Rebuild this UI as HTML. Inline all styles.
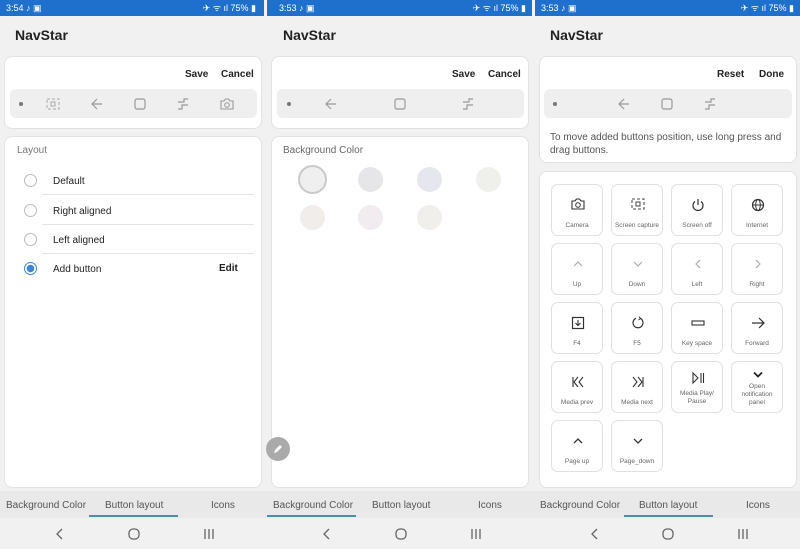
<!DOCTYPE html>
<html><head><meta charset="utf-8"><style>
*{box-sizing:border-box;margin:0;padding:0}
body{width:800px;height:549px;overflow:hidden;background:#f1f1f1;font-family:"Liberation Sans",sans-serif;position:relative}
.a{position:absolute}
.sb{top:0;height:16px;background:#1f6fcc;color:#fff;font-size:9px;line-height:16px}
.title{font-size:14px;font-weight:bold;color:#222;top:27px}
.card{background:#fff;border:1px solid #e2e2e2;border-radius:8px}
.bar{background:#efefef;border-radius:6px}
.btn{font-size:10px;font-weight:bold;color:#222}
.tabs{top:491px;height:27px;background:#e9e9e9}
.tab{font-size:10px;color:#555;top:500px}
.ul{top:515px;height:2px;background:#4d8fa0}
.nav{top:518px;height:31px;background:#f1f1f1}
svg{position:absolute;overflow:visible}
.row{font-size:10px;color:#222}
.rad{width:13px;height:13px;border:1.5px solid #bbb;border-radius:50%}
.sep{height:1px;background:#e4e4e4}
.g{width:52px;height:52px;border:1px solid #e0e0e0;border-radius:7px;background:#fff}
.g svg{left:19px;top:13px}
.gl{position:absolute;left:0;right:0;text-align:center;font-size:6.5px;color:#666;line-height:8px}
.dot{width:4px;height:4px;border-radius:50%;background:#777}
.c{width:29px;height:29px;border-radius:50%}
</style></head><body>

<div class="a sb" style="left:0;width:264px"><span style="margin-left:6px">3:54 ♪ ▣</span><span style="position:absolute;right:8px">✈ ᯤ ıl 75% ▮</span></div>
<div class="a sb" style="left:267px;width:265px"><span style="margin-left:12px">3:53 ♪ ▣</span><span style="position:absolute;right:6px">✈ ᯤ ıl 75% ▮</span></div>
<div class="a sb" style="left:535px;width:265px"><span style="margin-left:6px">3:53 ♪ ▣</span><span style="position:absolute;right:6px">✈ ᯤ ıl 75% ▮</span></div>

<div class="a title" style="left:15px">NavStar</div>
<div class="a title" style="left:283px">NavStar</div>
<div class="a title" style="left:550px">NavStar</div>

<!-- Panel 1 -->
<div class="a card" style="left:4px;top:56px;width:258px;height:73px"></div>
<div class="a btn" style="left:185px;top:69px">Save</div>
<div class="a btn" style="left:221px;top:69px">Cancel</div>
<div class="a bar" style="left:10px;top:89px;width:247px;height:29px"></div>
<div class="a dot" style="left:19px;top:102px"></div>
<svg style="left:46px;top:98px" width="14" height="12"><rect x="1" y="1" width="12" height="10" fill="none" stroke="#aaa" stroke-dasharray="3 2"/><rect x="5" y="4" width="4" height="4" fill="none" stroke="#aaa"/></svg>
<svg style="left:91px;top:98px" width="12" height="12"><path d="M11 6H1M6 1L1 6l5 5" fill="none" stroke="#999" stroke-width="1.2"/></svg>
<svg style="left:134px;top:98px" width="12" height="12"><rect x="1" y="1" width="10" height="10" rx="2" fill="none" stroke="#999" stroke-width="1.2"/></svg>
<svg style="left:177px;top:98px" width="12" height="12"><path d="M1 4h6v-3h4M1 11h4v-4h6" fill="none" stroke="#999" stroke-width="1.2"/></svg>
<svg style="left:220px;top:98px" width="14" height="12"><path d="M1 3h3l1.5-2h3L10 3h3v8H1z" fill="none" stroke="#999" stroke-width="1.1"/><circle cx="7" cy="7" r="2.3" fill="none" stroke="#999"/></svg>

<div class="a card" style="left:4px;top:136px;width:258px;height:352px"></div>
<div class="a" style="left:17px;top:145px;font-size:10px;color:#777">Layout</div>
<div class="a rad" style="left:24px;top:174px"></div>
<div class="a row" style="left:53px;top:176px">Default</div>
<div class="a sep" style="left:42px;top:194px;width:212px"></div>
<div class="a rad" style="left:24px;top:204px"></div>
<div class="a row" style="left:53px;top:206px">Right aligned</div>
<div class="a sep" style="left:42px;top:224px;width:212px"></div>
<div class="a rad" style="left:24px;top:233px"></div>
<div class="a row" style="left:53px;top:235px">Left aligned</div>
<div class="a sep" style="left:42px;top:253px;width:212px"></div>
<div class="a rad" style="left:24px;top:262px;border-color:#3d86d8;background:radial-gradient(circle,#3d86d8 0 3.5px,#fff 4px)"></div>
<div class="a row" style="left:53px;top:264px">Add button</div>
<div class="a btn" style="left:219px;top:263px">Edit</div>

<!-- Panel 2 -->
<div class="a card" style="left:271px;top:56px;width:258px;height:73px"></div>
<div class="a btn" style="left:452px;top:69px">Save</div>
<div class="a btn" style="left:488px;top:69px">Cancel</div>
<div class="a bar" style="left:277px;top:89px;width:247px;height:29px"></div>
<div class="a dot" style="left:287px;top:102px"></div>
<svg style="left:325px;top:98px" width="12" height="12"><path d="M11 6H1M6 1L1 6l5 5" fill="none" stroke="#999" stroke-width="1.2"/></svg>
<svg style="left:394px;top:98px" width="12" height="12"><rect x="1" y="1" width="10" height="10" rx="2" fill="none" stroke="#999" stroke-width="1.2"/></svg>
<svg style="left:462px;top:98px" width="12" height="12"><path d="M1 4h6v-3h4M1 11h4v-4h6" fill="none" stroke="#999" stroke-width="1.2"/></svg>
<div class="a card" style="left:271px;top:136px;width:258px;height:352px"></div>
<div class="a" style="left:283px;top:145px;font-size:10px;color:#666">Background Color</div>
<div class="a c" style="left:298px;top:165px;background:#efefef;border:2px solid #c9c9c9"></div>
<div class="a c" style="left:358px;top:167px;width:25px;height:25px;background:#e6e6e8"></div>
<div class="a c" style="left:417px;top:167px;width:25px;height:25px;background:#e6e6ef"></div>
<div class="a c" style="left:476px;top:167px;width:25px;height:25px;background:#eff0eb"></div>
<div class="a c" style="left:300px;top:205px;width:25px;height:25px;background:#f1edeb"></div>
<div class="a c" style="left:358px;top:205px;width:25px;height:25px;background:#f1ecef"></div>
<div class="a c" style="left:417px;top:205px;width:25px;height:25px;background:#f1efeb"></div>
<div class="a c" style="left:266px;top:437px;width:24px;height:24px;background:#aaa"></div>
<svg style="left:272px;top:443px" width="12" height="12"><path d="M2 10l1-3 5-5 2 2-5 5z" fill="#fff"/></svg>

<!-- Panel 3 -->
<div class="a card" style="left:539px;top:56px;width:258px;height:107px"></div>
<div class="a btn" style="left:717px;top:69px">Reset</div>
<div class="a btn" style="left:759px;top:69px">Done</div>
<div class="a bar" style="left:544px;top:89px;width:248px;height:29px"></div>
<div class="a dot" style="left:553px;top:102px"></div>
<svg style="left:618px;top:98px" width="12" height="12"><path d="M11 6H1M6 1L1 6l5 5" fill="none" stroke="#999" stroke-width="1.2"/></svg>
<svg style="left:661px;top:98px" width="12" height="12"><rect x="1" y="1" width="10" height="10" rx="2" fill="none" stroke="#999" stroke-width="1.2"/></svg>
<svg style="left:704px;top:98px" width="12" height="12"><path d="M1 4h6v-3h4M1 11h4v-4h6" fill="none" stroke="#999" stroke-width="1.2"/></svg>
<div class="a" style="left:550px;top:131px;width:240px;font-size:10px;color:#555;line-height:13px">To move added buttons position, use long press and drag buttons.</div>

<div class="a card" style="left:539px;top:171px;width:258px;height:317px"></div>

<div class="a g" style="left:551px;top:184px"><svg width="14" height="12"><path d="M1 3h3l1.5-2h3L10 3h3v8H1z" fill="none" stroke="#333" stroke-width="1.1"/><circle cx="7" cy="7" r="2.3" fill="none" stroke="#333"/></svg><div class="gl" style="top:37px">Camera</div></div>
<div class="a g" style="left:611px;top:184px"><svg width="14" height="12"><rect x="1" y="1" width="12" height="10" fill="none" stroke="#444" stroke-dasharray="3 2"/><rect x="5" y="4" width="4" height="4" fill="none" stroke="#444"/></svg><div class="gl" style="top:37px">Screen capture</div></div>
<div class="a g" style="left:671px;top:184px"><svg width="14" height="14"><path d="M4 3.5A5 5 0 1 0 10 3.5M7 1v6" fill="none" stroke="#333" stroke-width="1.2"/></svg><div class="gl" style="top:37px">Screen off</div></div>
<div class="a g" style="left:731px;top:184px"><svg width="14" height="14"><circle cx="7" cy="7" r="5.5" fill="none" stroke="#333" stroke-width="1.2"/><ellipse cx="7" cy="7" rx="2.3" ry="5.5" fill="none" stroke="#333"/><path d="M1.5 7h11" stroke="#333"/></svg><div class="gl" style="top:37px">Internet</div></div>

<div class="a g" style="left:551px;top:243px"><svg width="14" height="14"><path d="M3 9l4-4 4 4" fill="none" stroke="#aaa" stroke-width="1.1"/></svg><div class="gl" style="top:37px">Up</div></div>
<div class="a g" style="left:611px;top:243px"><svg width="14" height="14"><path d="M3 5l4 4 4-4" fill="none" stroke="#aaa" stroke-width="1.1"/></svg><div class="gl" style="top:37px">Down</div></div>
<div class="a g" style="left:671px;top:243px"><svg width="14" height="14"><path d="M9 3L5 7l4 4" fill="none" stroke="#aaa" stroke-width="1.1"/></svg><div class="gl" style="top:37px">Left</div></div>
<div class="a g" style="left:731px;top:243px"><svg width="14" height="14"><path d="M5 3l4 4-4 4" fill="none" stroke="#aaa" stroke-width="1.1"/></svg><div class="gl" style="top:37px">Right</div></div>

<div class="a g" style="left:551px;top:302px"><svg width="14" height="14"><rect x="1.5" y="1.5" width="11" height="11" fill="none" stroke="#333" stroke-width="1.2"/><path d="M7 4v5M4.5 7L7 9.5 9.5 7" fill="none" stroke="#333" stroke-width="1.1"/></svg><div class="gl" style="top:37px">F4</div></div>
<div class="a g" style="left:611px;top:302px"><svg width="14" height="14"><path d="M9 2.2A5 5 0 1 1 5 2.2" fill="none" stroke="#333" stroke-width="1.2"/><path d="M8 0.5l1.5 2-2 1.5" fill="none" stroke="#333"/></svg><div class="gl" style="top:37px">F5</div></div>
<div class="a g" style="left:671px;top:302px"><svg width="14" height="14"><rect x="1" y="5" width="12" height="4" fill="none" stroke="#333" stroke-width="1.1"/></svg><div class="gl" style="top:37px">Key space</div></div>
<div class="a g" style="left:731px;top:302px"><svg width="14" height="14"><path d="M1 7h12M8 2l5 5-5 5" fill="none" stroke="#333" stroke-width="1.2"/></svg><div class="gl" style="top:37px">Forward</div></div>

<div class="a g" style="left:551px;top:361px"><svg width="14" height="14"><path d="M2 2v10M7 2L3 7l4 5M12 2L8 7l4 5" fill="none" stroke="#333" stroke-width="1.1"/></svg><div class="gl" style="top:37px">Media prev</div></div>
<div class="a g" style="left:611px;top:361px"><svg width="14" height="14"><path d="M12 2v10M7 2l4 5-4 5M2 2l4 5-4 5" fill="none" stroke="#333" stroke-width="1.1"/></svg><div class="gl" style="top:37px">Media next</div></div>
<div class="a g" style="left:671px;top:361px"><svg width="14" height="14" style="top:9px"><path d="M2 2l5 5-5 5z M10 2v10M12.5 2v10" fill="none" stroke="#333" stroke-width="1.1"/></svg><div class="gl" style="top:28px">Media Play/<br>Pause</div></div>
<div class="a g" style="left:731px;top:361px"><svg width="14" height="8" style="top:9px"><path d="M3 1.5l4 4 4-4" fill="none" stroke="#222" stroke-width="1.8"/></svg><div class="gl" style="top:21px">Open<br>notification<br>panel</div></div>

<div class="a g" style="left:551px;top:420px"><svg width="14" height="14"><path d="M3 9l4-4 4 4" fill="none" stroke="#333" stroke-width="1.3"/></svg><div class="gl" style="top:37px">Page up</div></div>
<div class="a g" style="left:611px;top:420px"><svg width="14" height="14"><path d="M3 5l4 4 4-4" fill="none" stroke="#333" stroke-width="1.3"/></svg><div class="gl" style="top:37px">Page_down</div></div>

<!-- tabs -->
<div class="a tabs" style="left:0;width:800px"></div>
<div class="a tab" style="left:6px">Background Color</div>
<div class="a tab" style="left:105px">Button layout</div>
<div class="a tab" style="left:211px">Icons</div>
<div class="a ul" style="left:89px;width:89px"></div>
<div class="a tab" style="left:273px">Background Color</div>
<div class="a tab" style="left:372px">Button layout</div>
<div class="a tab" style="left:478px">Icons</div>
<div class="a ul" style="left:267px;width:89px"></div>
<div class="a tab" style="left:540px">Background Color</div>
<div class="a tab" style="left:639px">Button layout</div>
<div class="a tab" style="left:746px">Icons</div>
<div class="a ul" style="left:624px;width:89px"></div>

<!-- nav bar -->
<div class="a nav" style="left:0;width:800px"></div>
<svg style="left:55px;top:528px" width="10" height="12"><path d="M7 1L2 6l5 5" fill="none" stroke="#666" stroke-width="1.3"/></svg>
<svg style="left:128px;top:528px" width="12" height="12"><rect x="1" y="1" width="10" height="10" rx="4" fill="none" stroke="#666" stroke-width="1.3"/></svg>
<svg style="left:203px;top:529px" width="12" height="10"><path d="M2 0v10M6 0v10M10 0v10" stroke="#666" stroke-width="1.3"/></svg>
<svg style="left:322px;top:528px" width="10" height="12"><path d="M7 1L2 6l5 5" fill="none" stroke="#666" stroke-width="1.3"/></svg>
<svg style="left:395px;top:528px" width="12" height="12"><rect x="1" y="1" width="10" height="10" rx="4" fill="none" stroke="#666" stroke-width="1.3"/></svg>
<svg style="left:470px;top:529px" width="12" height="10"><path d="M2 0v10M6 0v10M10 0v10" stroke="#666" stroke-width="1.3"/></svg>
<svg style="left:590px;top:528px" width="10" height="12"><path d="M7 1L2 6l5 5" fill="none" stroke="#666" stroke-width="1.3"/></svg>
<svg style="left:662px;top:528px" width="12" height="12"><rect x="1" y="1" width="10" height="10" rx="4" fill="none" stroke="#666" stroke-width="1.3"/></svg>
<svg style="left:737px;top:529px" width="12" height="10"><path d="M2 0v10M6 0v10M10 0v10" stroke="#666" stroke-width="1.3"/></svg>
</body></html>
